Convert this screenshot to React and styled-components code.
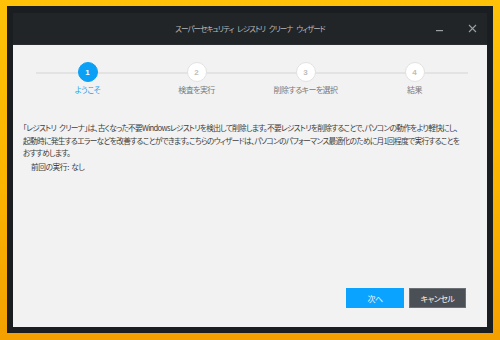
import React from 'react'
import styled, { createGlobalStyle } from 'styled-components'

const GlobalStyle = createGlobalStyle`
  html, body {
    margin: 0;
    padding: 0;
  }
  body {
    width: 500px;
    height: 340px;
    overflow: hidden;
    background: linear-gradient(180deg, #ffc208 0%, #fbb400 55%, #f4a000 100%);
    font-family: "Noto Sans CJK JP", "Noto Sans", sans-serif;
    font-feature-settings: "palt";
  }
`

const Page = styled.div`
  padding: 6px 7px 7px 7px;
`

const Window = styled.div`
  width: 486px;
  height: 327px;
  box-sizing: border-box;
  background: #1b1e21;
  padding: 7px 6px 6px 6px;
  display: flex;
  flex-direction: column;
  overflow: hidden;
`

const TitleBar = styled.div`
  height: 31px;
  background: #212528;
  border-bottom: 1px solid #2a2e32;
  display: flex;
  align-items: center;
  justify-content: center;
  position: relative;
`

const Title = styled.div`
  font-size: 7.6px;
  letter-spacing: -1px;
  word-spacing: 3px;
  color: #b4b8bc;
  white-space: nowrap;
`

const WinButtons = styled.div`
  position: absolute;
  right: 10px;
  top: 0;
  bottom: 0;
  display: flex;
  align-items: center;
  gap: 24px;
`

const WinButton = styled.div`
  width: 9px;
  height: 9px;
  display: flex;
  align-items: center;
  justify-content: center;
`

const Content = styled.div`
  flex: 1;
  background: #f2f2f2;
  display: flex;
  flex-direction: column;
  padding: 17px 21px 19px 10px;
`

const Stepper = styled.div`
  position: relative;
  display: grid;
  grid-template-columns: repeat(4, 109px);
  margin-left: 10px;
  &::before {
    content: '';
    position: absolute;
    left: 3px;
    right: -2px;
    top: 10px;
    height: 2px;
    background: #e3e3e3;
  }
`

const Step = styled.div`
  display: flex;
  flex-direction: column;
  align-items: center;
  position: relative;
`

const Circle = styled.div`
  width: 20px;
  height: 20px;
  border-radius: 50%;
  box-sizing: border-box;
  background: ${p => (p.active ? '#0aa0f6' : '#ffffff')};
  border: 1px solid ${p => (p.active ? '#0aa0f6' : '#e2e2e2')};
  color: ${p => (p.active ? '#ffffff' : '#bdbdbd')};
  font-family: "Liberation Sans", Arial, sans-serif;
  font-size: 8px;
  font-weight: bold;
  display: flex;
  align-items: center;
  justify-content: center;
`

const StepLabel = styled.div`
  margin-top: 2px;
  font-size: 8px;
  letter-spacing: -0.6px;
  line-height: 12px;
  color: ${p => (p.active ? '#1aa3ee' : '#7a7a7a')};
`

const Body = styled.div`
  margin-top: 26px;
  font-size: 7.7px;
  letter-spacing: -0.7px;
  word-spacing: 2px;
  line-height: 12.5px;
  color: #404040;
`

const Line = styled.div`
  white-space: nowrap;
`

const LastRun = styled.div`
  margin-top: 1px;
  padding-left: 8px;
  font-size: 7.7px;
  letter-spacing: -0.4px;
  word-spacing: 1px;
  line-height: 12.5px;
  color: #404040;
`

const Footer = styled.div`
  margin-top: auto;
  display: flex;
  justify-content: flex-end;
  gap: 5px;
`

const Button = styled.button`
  width: ${p => p.w}px;
  height: 20px;
  box-sizing: border-box;
  font-family: inherit;
  font-feature-settings: "palt";
  font-size: 8px;
  letter-spacing: -0.5px;
  color: #f4f4f4;
  border: 1px solid ${p => (p.primary ? '#0aa3ff' : '#6b7075')};
  background: ${p => (p.primary ? '#0aa3ff' : '#4b5056')};
  padding: 0;
  cursor: pointer;
`

const steps = ['ようこそ', '検査を実行', '削除するキーを選択', '結果']

const App = () => {
  return (
    <Page>
      <GlobalStyle />
      <Window>
        <TitleBar>
          <Title>スーパーセキュリティ レジストリ クリーナ ウィザード</Title>
          <WinButtons>
            <WinButton>
              <svg width="9" height="9" viewBox="0 0 9 9">
                <rect x="1" y="6" width="7" height="1.2" fill="#9ba0a5" />
              </svg>
            </WinButton>
            <WinButton>
              <svg width="9" height="9" viewBox="0 0 9 9">
                <path d="M1 1L8 8M8 1L1 8" stroke="#9ba0a5" strokeWidth="1.1" />
              </svg>
            </WinButton>
          </WinButtons>
        </TitleBar>
        <Content>
          <Stepper>
            {steps.map((s, i) => (
              <Step key={i}>
                <Circle active={i === 0}>{i + 1}</Circle>
                <StepLabel active={i === 0}>{s}</StepLabel>
              </Step>
            ))}
          </Stepper>
          <Body>
            <Line>「レジストリ クリーナ」は、古くなった不要Windowsレジストリを検出して削除します。不要レジストリを削除することで、パソコンの動作をより軽快にし、</Line>
            <Line>起動時に発生するエラーなどを改善することができます。こちらのウィザードは、パソコンのパフォーマンス最適化のために月1回程度で実行することを</Line>
            <Line>おすすめします。</Line>
          </Body>
          <LastRun>前回の実行: なし</LastRun>
          <Footer>
            <Button primary w={58}>次へ</Button>
            <Button w={57}>キャンセル</Button>
          </Footer>
        </Content>
      </Window>
    </Page>
  )
}

export default App
